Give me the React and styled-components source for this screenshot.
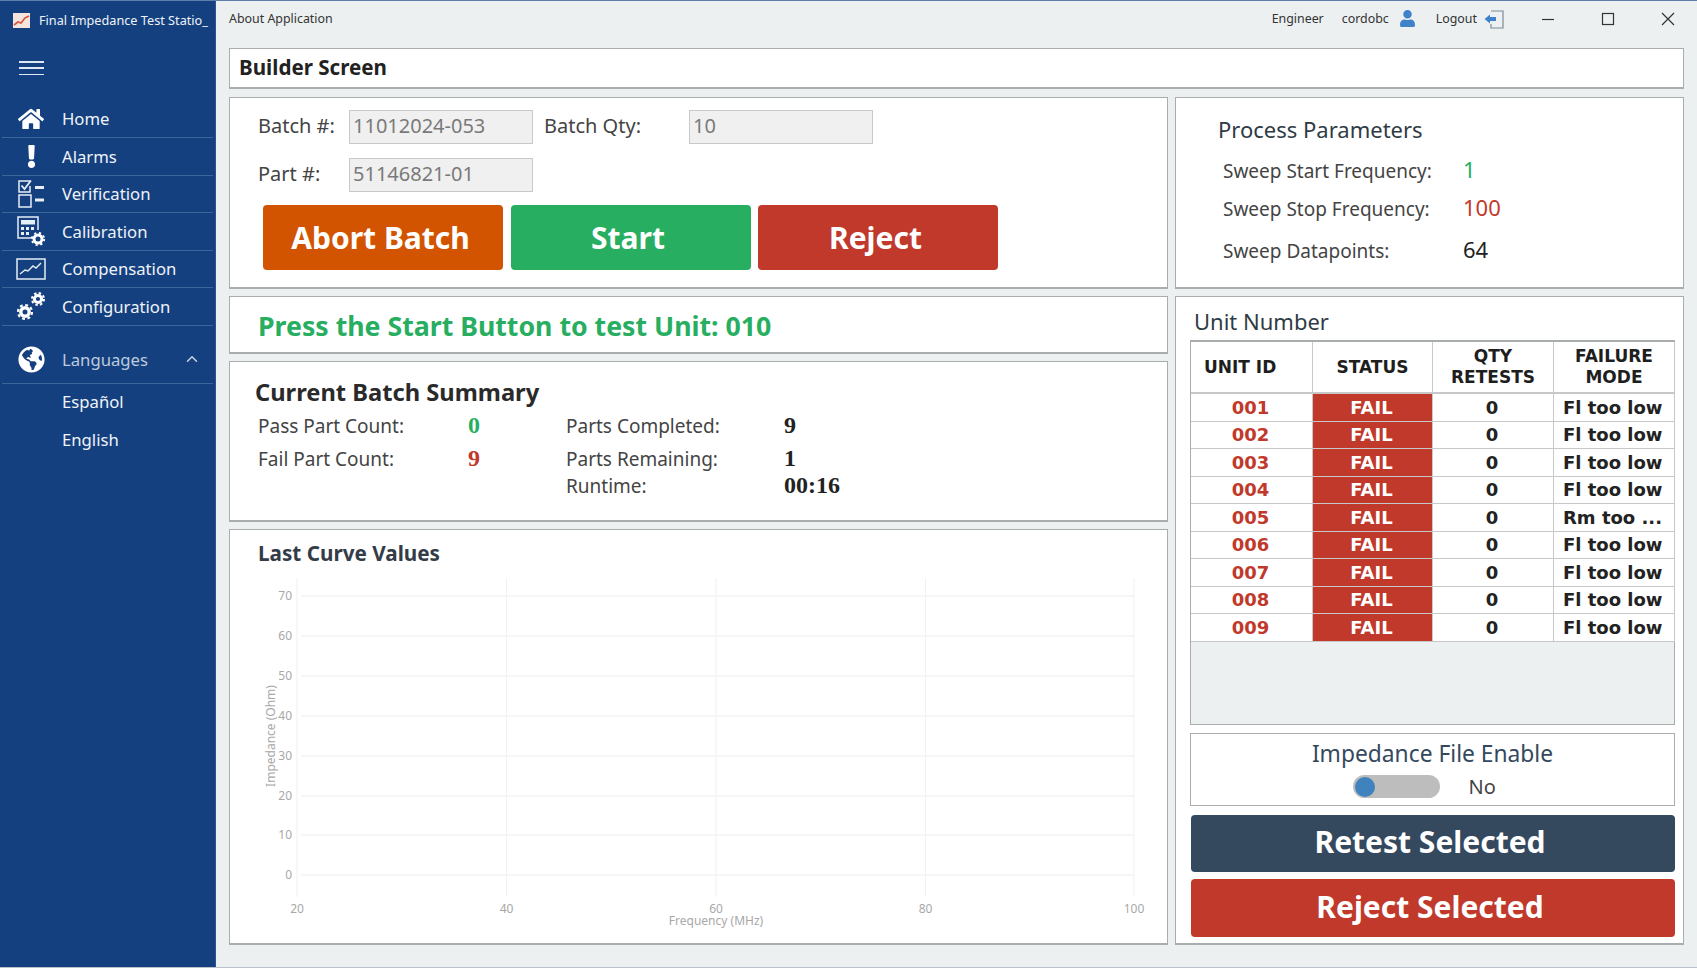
import React from 'react';
import styled, { createGlobalStyle } from 'styled-components';
import { FaHome, FaExclamation, FaGlobeAmericas, FaUser } from 'react-icons/fa';
import { ChevronUp } from 'lucide-react';

const Global = createGlobalStyle`
  html, body { margin: 0; padding: 0; height: 100%; background: #ecf0f1; }
  * { box-sizing: border-box; }
  body { font-family: "Noto Sans", sans-serif; }
`;

const Page = styled.div`display: flex; width: 1697px; height: 968px; overflow: hidden; background: #ecf0f1; border-top: 1px solid #5b7fa8; border-bottom: 1px solid #b9c2cc;`;

const Sidebar = styled.aside`width: 216px; flex: none; background: #15407f; border-right: 1px solid #2a5590; color: #eef3f8; display: flex; flex-direction: column;`;
const AppTitle = styled.div`height: 38px; display: flex; align-items: center; gap: 9px; padding-left: 13px; font-size: 12.7px; white-space: nowrap; overflow: hidden; svg { flex: none; }`;
const Burger = styled.div`margin: 22px 0 0 19px; width: 25px; height: 14px; display: flex; flex-direction: column; justify-content: space-between; span { height: 1.5px; background: #dfe8f2; }`;
const Nav = styled.nav`margin-top: 25.5px; display: flex; flex-direction: column;`;
const NavRow = styled.div`height: 37.5px; margin: 0 2px; border-bottom: 1px solid ${p => p.$plain ? 'transparent' : '#3c659b'}; display: flex; align-items: center; font-size: 16.7px; color: ${p => p.$dim ? '#bccbdd' : '#eef3f8'};`;
const NavIcon = styled.span`width: 60px; flex: none; display: flex; justify-content: center; padding-right: 2px; color: #fff; svg { display: block; }`;
const SubRow = styled(NavRow)`padding-left: 60px;`;
const LangRow = styled(NavRow)`height: 48px; margin-top: 10px; justify-content: flex-start; svg.chev { margin-left: auto; margin-right: 12px; color: #c6d3e3; }`;

const Main = styled.main`flex: 1; min-width: 0; display: flex; flex-direction: column; padding: 0 13px 0 13px;`;
const TopBar = styled.header`height: 47px; flex: none; margin-right: -13px; padding-bottom: 12px; display: flex; align-items: center; font-size: 12.4px; color: #333;`;
const TopRight = styled.div`margin-left: auto; display: flex; align-items: center;`;
const TopText = styled.span`margin-left: ${p => p.$ml}px;`;
const TopIcon = styled.span`display: flex; margin-left: ${p => p.$ml}px; color: #3f82c9;`;
const WinBtn = styled.span`display: flex; margin-left: ${p => p.$ml}px;`;

const TitleBox = styled.div`height: 41px; flex: none; background: #fff; border: 1px solid #a9adae; border-bottom-width: 2px; padding: 0 0 3px 9px; display: flex; align-items: center; font-size: 20.6px; font-weight: 700; color: #222;`;
const Columns = styled.div`margin-top: 8px; display: grid; grid-template-columns: 939px 509px; gap: 7px; height: 848px;`;
const Column = styled.div`display: flex; flex-direction: column; gap: 7px; min-height: 0;`;
const Panel = styled.section`background: #fff; border: 1px solid #a9adae; border-bottom-width: 2px; height: ${p => p.$h}px; flex: ${p => p.$h ? 'none' : 1}; position: relative; min-height: 0;`;

const BatchPanel = styled(Panel)`padding: 11.5px 0 0 28px;`;
const FormRow = styled.div`display: flex; align-items: center; height: 34px; margin-bottom: 14px; font-size: 20px; color: #444;`;
const FormLabel = styled.label`width: ${p => p.$w}px; flex: none; margin-left: ${p => p.$ml || 0}px; padding-bottom: 3px;`;
const Field = styled.div`width: 184px; height: 34px; background: #f0f0f0; border: 1px solid #c9c9c9; padding: 0 0 3px 3px; color: #7a7a7a; display: flex; align-items: center; font-size: 20px;`;
const ButtonRow = styled.div`display: flex; gap: 7.5px; margin: -0.5px 0 0 5px;`;
const ActionButton = styled.button`width: 240px; height: 65px; border: 0; border-radius: 4px; padding: 0 5px 0 0; background: ${p => p.$bg}; color: #fff; font: 700 30px "Noto Sans", sans-serif;`;

const MessagePanel = styled(Panel)`display: flex; align-items: center; padding: 2px 0 0 28px; font: 700 26.7px "Noto Sans", sans-serif; color: #27ae60;`;

const SummaryPanel = styled(Panel)`padding: 12px 0 0 25px;`;
const SummaryTitle = styled.h2`margin: 0 0 -1px; font: 700 23.7px "Noto Sans", sans-serif; color: #2a2a2a; line-height: 36px;`;
const SummaryGrid = styled.div`display: grid; grid-template-columns: 210px 98px 218px 100px; grid-template-rows: 33px 33px 21px; margin-left: 3px; font-size: 19px; color: #444; align-items: center;`;
const SerifValue = styled.span`font: 700 24px "Liberation Serif", serif; color: ${p => p.$c || '#222'};`;

const ChartPanel = styled(Panel)`display: flex; flex-direction: column;`;
const ChartTitle = styled.h3`margin: 8px 0 0 28px; font-size: 20.7px; font-weight: 700; color: #333c47; line-height: 30px;`;
const ChartSvg = styled.svg`display: block; flex: none; margin-top: 2px;`;

const ProcessPanel = styled(Panel)`padding: 14px 0 0 42px;`;
const ProcessTitle = styled.h3`margin: 0 0 6px; font-size: 22px; font-weight: 400; color: #2f3b45; line-height: 34px;`;
const ProcessRow = styled.div`display: flex; align-items: center; height: ${p => p.$h}px; padding-left: 5px; font-size: 19px; color: #444;`;
const ProcessLabel = styled.span`width: 240px;`;
const ProcessValue = styled.span`font-size: 22px; color: ${p => p.$c}; margin-top: -4px;`;

const UnitPanel = styled(Panel)`padding: 8px 8px 6px 14px; display: flex; flex-direction: column;`;
const UnitTitle = styled.h3`margin: 0 0 3px; font-size: 22px; font-weight: 400; color: #2f3b45; line-height: 32px; padding-left: 4px;`;
const TableBox = styled.div`height: 385px; flex: none; background: #ecf0f1; border: 1px solid #a9adae; border-top-width: 2px; font-family: "DejaVu Sans", sans-serif; font-weight: 700;`;
const TableGrid = styled.div`display: grid; grid-template-columns: 122px 120px 121px 121px; background: #fff; width: 484px;`;
const HeadCell = styled.div`height: 52px; border: 0 solid #c8c8c8; border-width: 0 1px 2px 0; display: flex; align-items: center; justify-content: ${p => p.$left ? 'flex-start' : 'center'}; padding-left: ${p => p.$left ? 13 : 0}px; text-align: center; font-size: 17px; line-height: 21px; color: #1e1e1e;`;
const Cell = styled.div`height: 27.5px; border: 0 solid #c8c8c8; border-width: 0 1px 1.5px 0; display: flex; align-items: center; justify-content: center; padding-right: 2px; font-size: 18px; color: ${p => p.$c || '#222'}; background: ${p => p.$bg || 'transparent'}; white-space: nowrap;`;
const ModeCell = styled(Cell)`justify-content: flex-start; padding-left: 9px;`;

const FileBox = styled.div`margin-top: 8px; height: 73px; flex: none; border: 1px solid #a9adae; display: flex; flex-direction: column; align-items: center; color: #34495e;`;
const FileTitle = styled.div`font-size: 22.8px; line-height: 30px; margin-top: 5px;`;
const ToggleRow = styled.div`display: flex; align-items: center; margin-top: 4px;`;
const Toggle = styled.div`width: 87px; height: 23px; border-radius: 12px; background: #bdbdbd; position: relative;`;
const Knob = styled.span`position: absolute; left: 2px; top: 1.5px; width: 20px; height: 20px; border-radius: 50%; background: #3f82bd;`;
const ToggleText = styled.span`margin-left: 29px; margin-right: 18px; width: 26px; font-size: 20px; color: #444;`;
const WideButton = styled.button`height: ${p => p.$h}px; margin: ${p => p.$mt}px 0 0 1px; width: 484px; flex: none; border: 0; border-radius: 4px; padding: 0 6px 4px 0; background: ${p => p.$bg}; color: #fff; font: 700 30px "Noto Sans", sans-serif;`;

const Logo = () => (
  <svg width="17" height="15" viewBox="0 0 17 15"><rect width="17" height="15" fill="#f3e4de" /><path d="M1 12 L5 9 L8 10 L12 5 L16 3" stroke="#d8563f" strokeWidth="1.6" fill="none" /></svg>
);
const CheckIcon = () => (
  <svg width="28" height="29" viewBox="0 0 28 29" fill="none" stroke="#e6eef6" strokeWidth="1.5"><path d="M13 2 H2 V13 H13 V7" /><path d="M4.5 6.5 L7.5 10 L14 1.5" strokeWidth="1.8" /><rect x="2" y="16" width="12" height="12" /><path d="M18 8.5 H27 M18 21 H27" strokeWidth="3" /></svg>
);
const CalcIcon = () => (
  <svg width="30" height="30" viewBox="0 0 30 30"><path d="M18 22 H2 V1 H22 V14" fill="none" stroke="#e6eef6" strokeWidth="1.5" /><rect x="5" y="4" width="14" height="4.5" fill="#e6eef6" /><path d="M5 11h3v3H5zM10 11h3v3h-3zM15 11h3v3h-3zM5 16h3v3H5zM10 16h3v3h-3z" fill="#e6eef6" /><circle cx="22" cy="23" r="4" fill="none" stroke="#fff" strokeWidth="3" /><circle cx="22" cy="23" r="6.2" fill="none" stroke="#fff" strokeWidth="1.8" strokeDasharray="2.2 2.7" /></svg>
);
const TrendIcon = () => (
  <svg width="30" height="22" viewBox="0 0 30 22" fill="none" stroke="#e6eef6"><rect x="1" y="1" width="28" height="20" strokeWidth="1.5" /><path d="M4 16 L9 12 L12 13 L17 8 L20 10 L25 5" strokeWidth="1.4" /></svg>
);
const GearsIcon = () => (
  <svg width="30" height="30" viewBox="0 0 30 30" fill="none" stroke="#fff">
    <circle cx="9" cy="21" r="4.2" strokeWidth="3.4" />
    <circle cx="9" cy="21" r="7" strokeWidth="2.2" strokeDasharray="2.9 2.6" />
    <circle cx="22" cy="8" r="3.6" strokeWidth="3" />
    <circle cx="22" cy="8" r="6" strokeWidth="2" strokeDasharray="2.5 2.2" />
  </svg>
);
const LogoutIcon = () => (
  <svg width="20" height="20" viewBox="0 0 20 20" fill="none"><path d="M7 2 H19 V19 H7 V15" stroke="#7c8a96" strokeWidth="1.2" /><path d="M0.5 10 L6 5.5 V8 H12 V12 H6 V14.5 Z" fill="#3f82c9" /></svg>
);

const units = ['001','002','003','004','005','006','007','008','009'];
const xTicks = [[297,20],[506.5,40],[716,60],[925.5,80],[1134,100]];
const yTicks = [[596,70],[636,60],[676,50],[716,40],[756,30],[796,20],[835,10],[875,0]];

const Chart = () => (
  <ChartSvg width="937" height="372" viewBox="230 570 937 372" fontFamily="Noto Sans, sans-serif" fill="#a8a8a8">
    {xTicks.map(([x, l]) => (
      <g key={l}>
        <line x1={x} x2={x} y1="578" y2="897" stroke="#f1f1f1" />
        <text x={x} y="913" fontSize="12" textAnchor="middle">{l}</text>
      </g>
    ))}
    {yTicks.map(([y, l]) => (
      <g key={l}>
        <line x1="301" x2="1134" y1={y} y2={y} stroke="#f3f3f3" strokeWidth="1.5" />
        <text x="292" y={y + 4} fontSize="12" textAnchor="end">{l}</text>
      </g>
    ))}
    <text x="716" y="925" fontSize="12" textAnchor="middle">Frequency (MHz)</text>
    <text x="0" y="0" fontSize="12" textAnchor="middle" transform="translate(275 736) rotate(-90)">Impedance (Ohm)</text>
  </ChartSvg>
);

export default function App() {
  return (
    <Page>
      <Global />
      <Sidebar>
        <AppTitle><Logo /><span>Final Impedance Test Statio_</span></AppTitle>
        <Burger><span /><span /><span /></Burger>
        <Nav>
          <NavRow><NavIcon><FaHome size={26} /></NavIcon>Home</NavRow>
          <NavRow><NavIcon><FaExclamation size={23} /></NavIcon>Alarms</NavRow>
          <NavRow><NavIcon><CheckIcon /></NavIcon>Verification</NavRow>
          <NavRow><NavIcon><CalcIcon /></NavIcon>Calibration</NavRow>
          <NavRow><NavIcon><TrendIcon /></NavIcon>Compensation</NavRow>
          <NavRow><NavIcon><GearsIcon /></NavIcon>Configuration</NavRow>
          <LangRow $dim><NavIcon><FaGlobeAmericas size={27} /></NavIcon>Languages<ChevronUp className="chev" size={18} /></LangRow>
          <SubRow $plain>Español</SubRow>
          <SubRow $plain>English</SubRow>
        </Nav>
      </Sidebar>
      <Main>
        <TopBar>
          <span>About Application</span>
          <TopRight>
            <TopText>Engineer</TopText>
            <TopText $ml={18}>cordobc</TopText>
            <TopIcon $ml={10}><FaUser size={17} /></TopIcon>
            <TopText $ml={20}>Logout</TopText>
            <TopIcon $ml={7}><LogoutIcon /></TopIcon>
            <WinBtn $ml={37}><svg width="14" height="14"><path d="M1 7.5H13" stroke="#333" strokeWidth="1.2" /></svg></WinBtn>
            <WinBtn $ml={46}><svg width="14" height="14"><rect x="1.5" y="1.5" width="11" height="11" fill="none" stroke="#333" strokeWidth="1.2" /></svg></WinBtn>
            <WinBtn $ml={46}><svg width="14" height="14"><path d="M1 1L13 13M13 1L1 13" stroke="#333" strokeWidth="1.2" /></svg></WinBtn>
            <WinBtn $ml={22} />
          </TopRight>
        </TopBar>
        <TitleBox>Builder Screen</TitleBox>
        <Columns>
          <Column>
            <BatchPanel $h={192}>
              <FormRow>
                <FormLabel $w={91}>Batch #:</FormLabel><Field>11012024-053</Field>
                <FormLabel $w={145} $ml={11}>Batch Qty:</FormLabel><Field>10</Field>
              </FormRow>
              <FormRow>
                <FormLabel $w={91}>Part #:</FormLabel><Field>51146821-01</Field>
              </FormRow>
              <ButtonRow>
                <ActionButton $bg="#d35400">Abort Batch</ActionButton>
                <ActionButton $bg="#27ae60">Start</ActionButton>
                <ActionButton $bg="#c0392b">Reject</ActionButton>
              </ButtonRow>
            </BatchPanel>
            <MessagePanel $h={58}>Press the Start Button to test Unit: 010</MessagePanel>
            <SummaryPanel $h={161}>
              <SummaryTitle>Current Batch Summary</SummaryTitle>
              <SummaryGrid>
                <span>Pass Part Count:</span><SerifValue $c="#27ae60">0</SerifValue>
                <span>Parts Completed:</span><SerifValue>9</SerifValue>
                <span>Fail Part Count:</span><SerifValue $c="#c0392b">9</SerifValue>
                <span>Parts Remaining:</span><SerifValue>1</SerifValue>
                <span /><span />
                <span>Runtime:</span><SerifValue>00:16</SerifValue>
              </SummaryGrid>
            </SummaryPanel>
            <ChartPanel>
              <ChartTitle>Last Curve Values</ChartTitle>
              <Chart />
            </ChartPanel>
          </Column>
          <Column>
            <ProcessPanel $h={192}>
              <ProcessTitle>Process Parameters</ProcessTitle>
              <ProcessRow $h={38}><ProcessLabel>Sweep Start Frequency:</ProcessLabel><ProcessValue $c="#27ae60">1</ProcessValue></ProcessRow>
              <ProcessRow $h={38}><ProcessLabel>Sweep Stop Frequency:</ProcessLabel><ProcessValue $c="#c0392b">100</ProcessValue></ProcessRow>
              <ProcessRow $h={46}><ProcessLabel>Sweep Datapoints:</ProcessLabel><ProcessValue $c="#222">64</ProcessValue></ProcessRow>
            </ProcessPanel>
            <UnitPanel>
              <UnitTitle>Unit Number</UnitTitle>
              <TableBox>
                <TableGrid>
                  <HeadCell $left>UNIT ID</HeadCell>
                  <HeadCell>STATUS</HeadCell>
                  <HeadCell>QTY<br />RETESTS</HeadCell>
                  <HeadCell>FAILURE<br />MODE</HeadCell>
                  {units.map(u => (
                    <React.Fragment key={u}>
                      <Cell $c="#c0392b">{u}</Cell>
                      <Cell $c="#fff" $bg="#c0392b">FAIL</Cell>
                      <Cell>0</Cell>
                      <ModeCell>{u === '005' ? 'Rm too ...' : 'Fl too low'}</ModeCell>
                    </React.Fragment>
                  ))}
                </TableGrid>
              </TableBox>
              <FileBox>
                <FileTitle>Impedance File Enable</FileTitle>
                <ToggleRow><Toggle><Knob /></Toggle><ToggleText>No</ToggleText></ToggleRow>
              </FileBox>
              <WideButton $h={57} $mt={9} $bg="#34495e">Retest Selected</WideButton>
              <WideButton $h={58} $mt={7} $bg="#c0392b">Reject Selected</WideButton>
            </UnitPanel>
          </Column>
        </Columns>
      </Main>
    </Page>
  );
}
